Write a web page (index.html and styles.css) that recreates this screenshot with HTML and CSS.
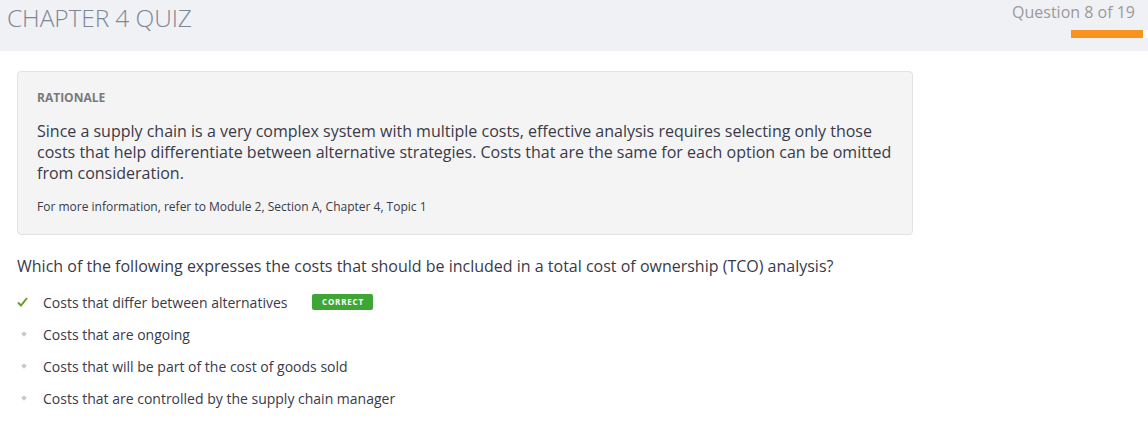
FILE: index.html
```html
<!DOCTYPE html>
<html>
<head>
<meta charset="utf-8">
<link rel="stylesheet" href="styles.css">
</head>
<body>
<header class="topbar">
  <h1 class="title">CHAPTER 4 QUIZ</h1>
  <div class="progress">
    <div class="progress-label">Question 8 of 19</div>
    <div class="progress-track"><div class="progress-fill"></div></div>
  </div>
</header>
<main class="content">
  <section class="rationale">
    <h2 class="rationale-head">RATIONALE</h2>
    <p class="rationale-text">Since a supply chain is a very complex system with multiple costs, effective analysis requires selecting only those costs that help differentiate between alternative strategies. Costs that are the same for each option can be omitted from consideration.</p>
    <p class="rationale-ref">For more information, refer to Module 2, Section A, Chapter 4, Topic 1</p>
  </section>
  <p class="question">Which of the following expresses the costs that should be included in a total cost of ownership (TCO) analysis?</p>
  <ul class="options">
    <li class="option">
      <span class="mark"><svg width="11" height="10" viewBox="0 0 11 10"><path d="M1 5.5 L4 8.5 L10 1" fill="none" stroke="#6b9b2f" stroke-width="2"/></svg></span>
      <span class="opt-text">Costs that differ between alternatives</span>
      <span class="badge">CORRECT</span>
    </li>
    <li class="option"><span class="mark"><span class="dot"></span></span><span class="opt-text">Costs that are ongoing</span></li>
    <li class="option"><span class="mark"><span class="dot"></span></span><span class="opt-text">Costs that will be part of the cost of goods sold</span></li>
    <li class="option"><span class="mark"><span class="dot"></span></span><span class="opt-text">Costs that are controlled by the supply chain manager</span></li>
  </ul>
</main>
</body>
</html>
```
FILE: styles.css
```css
* { box-sizing: border-box; }
html, body { margin: 0; padding: 0; }
body {
  font-family: "Open Sans", "Liberation Sans", sans-serif;
  color: #3a3a48;
  background: #fff;
  width: 1148px;
  height: 421px;
  overflow: hidden;
}
.topbar {
  height: 51px;
  background: #f0f1f5;
  display: flex;
  justify-content: space-between;
  align-items: flex-start;
  padding: 0 5px 0 7px;
}
.title {
  margin: 2px 0 0 0;
  font-size: 24.5px;
  font-weight: 300;
  color: #7d8795;
  line-height: 32px;
  letter-spacing: -0.1px;
}
.progress {
  display: flex;
  flex-direction: column;
  align-items: flex-end;
  padding-top: 1px;
}
.progress-label {
  font-size: 16px;
  color: #9a9a9a;
  line-height: 22px;
  margin-right: 8px;
}
.progress-track {
  margin-top: 7px;
  width: 77px;
  height: 8px;
  background: #fff;
  margin-right: -5px;
}
.progress-fill {
  width: 72px;
  height: 8px;
  background: #f7931e;
}
.content {
  padding: 20px 17px 0 17px;
}
.rationale {
  width: 896px;
  background: #f4f4f4;
  border: 1px solid #e2e2e2;
  border-radius: 4px;
  padding: 18px 19px 19px 19px;
}
.rationale-head {
  margin: 0;
  font-size: 12px;
  font-weight: 700;
  color: #7a7a7a;
  line-height: 16px;
}
.rationale-text {
  margin: 15px 0 0 0;
  font-size: 16px;
  line-height: 21px;
  color: #3a3a48;
}
.rationale-ref {
  margin: 15px 0 0 0;
  font-size: 12px;
  line-height: 16px;
  color: #3a3a48;
}
.question {
  margin: 20px 0 0 0;
  font-size: 16px;
  line-height: 22px;
  color: #3a3a48;
}
.options {
  list-style: none;
  margin: 9px 0 0 0;
  padding: 0;
}
.option {
  display: flex;
  align-items: center;
  height: 32px;
  font-size: 14px;
  color: #3a3a48;
}
.mark {
  width: 26px;
  display: flex;
  align-items: center;
  justify-content: flex-start;
}
.dot {
  display: inline-block;
  width: 4px;
  height: 4px;
  background: #c8c8c8;
  transform: rotate(45deg);
  margin-left: 5px;
}
.badge {
  margin-left: 25px;
  background: #3fa535;
  color: #fff;
  font-size: 8px;
  font-weight: 700;
  letter-spacing: 0.8px;
  padding: 0 9px;
  height: 16px;
  line-height: 16px;
  border-radius: 2px;
  width: 61px;
  text-align: center;
}
```
